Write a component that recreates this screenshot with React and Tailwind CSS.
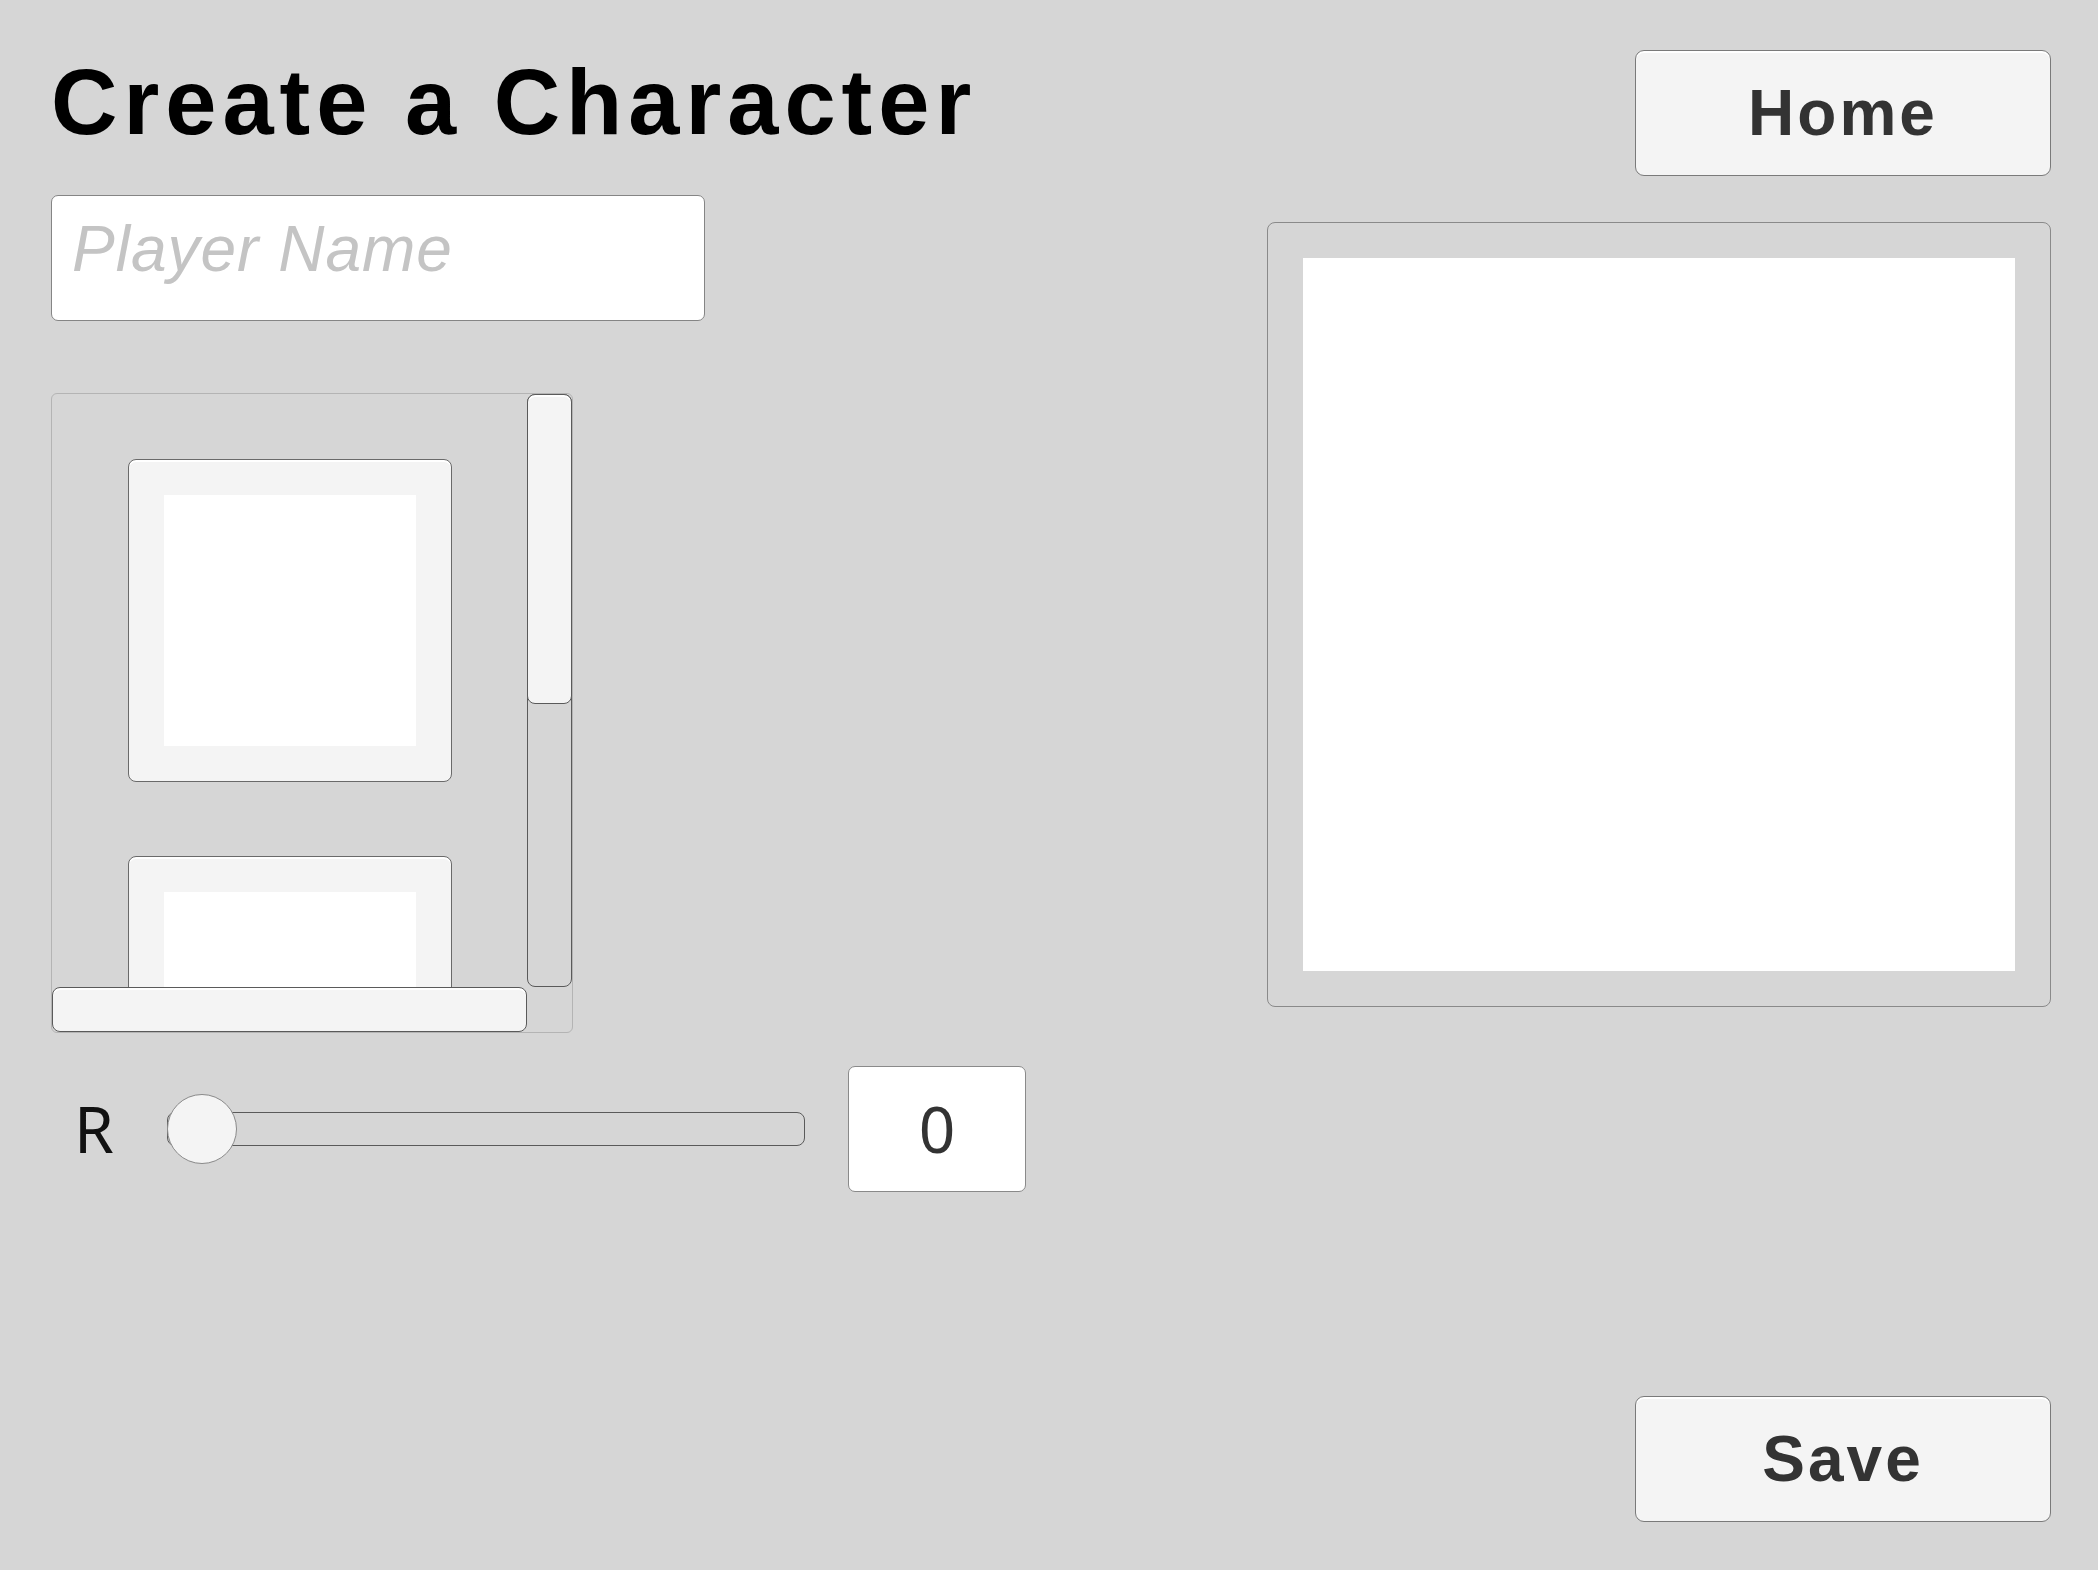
export default function App() {
  const font = { fontFamily: '"Liberation Sans", Arial, sans-serif' };
  const noto = { fontFamily: '"Noto Sans", "Liberation Sans", sans-serif' };
  return (
    <div
      className="w-[2098px] h-[1570px] bg-[#d6d6d6] flex justify-between overflow-hidden"
      style={font}
    >
      {/* Left column */}
      <div className="flex flex-col pl-[51px] pt-[56px]">
        <h1 className="m-0 text-[92px] leading-[92px] font-bold tracking-[6px] text-black whitespace-nowrap">
          Create a Character
        </h1>

        <input
          type="text"
          placeholder="Player Name"
          className="mt-[47px] w-[654px] h-[126px] box-border bg-white border border-[#858585] rounded-[7px] pl-[20px] pr-4 pt-0 pb-[19px] text-[64px] tracking-[1px] text-[#333] placeholder:text-[#c4c4c4] placeholder:italic outline-none"
          style={font}
        />

        {/* Scroll list */}
        <div className="mt-[72px] w-[522px] h-[640px] border border-[#b4b4b4] rounded-[6px] grid grid-cols-[475px_45px] grid-rows-[593px_45px] overflow-hidden">
          <div className="overflow-hidden flex flex-col items-center pt-[65px] gap-[74px]">
            {[0, 1].map((i) => (
              <div
                key={i}
                className="shrink-0 w-[324px] h-[323px] bg-[#f4f4f4] border border-[#6a6a6a] rounded-[8px] p-[35px] shadow-[inset_0_2px_0_#ffffff] flex"
              >
                <div className="flex-1 bg-white" />
              </div>
            ))}
          </div>
          <div className="border border-[#5a5a5a] rounded-[8px] flex flex-col">
            <div className="h-[310px] bg-[#f4f4f4] border border-[#5a5a5a] rounded-[8px] -m-px shadow-[inset_0_2px_0_#ffffff]" />
          </div>
          <div className="bg-[#f4f4f4] border border-[#5a5a5a] rounded-[8px] shadow-[inset_0_2px_0_#ffffff]" />
          <div />
        </div>

        {/* Slider row */}
        <div className="mt-[33px] flex items-center h-[126px]">
          <div className="w-[116px] pl-[23px] text-[64px] leading-[64px] text-[#111]" style={noto}>
            R
          </div>
          <div className="relative w-[638px] h-[70px] flex items-center">
            <div className="w-full h-[34px] border border-[#5a5a5a] rounded-[8px] bg-[#d6d6d6]" />
            <div className="absolute left-0 top-0 w-[70px] h-[70px] rounded-full bg-[#f4f4f4] border border-[#8a8a8a]" />
          </div>
          <div
            className="ml-[43px] w-[178px] h-[126px] bg-white border border-[#8a8a8a] rounded-[7px] flex items-center justify-center text-[64px] leading-[64px] text-[#333]"
            style={noto}
          >
            0
          </div>
        </div>
      </div>

      {/* Right column */}
      <div className="flex flex-col items-end pr-[47px] pt-[50px] pb-[48px]">
        <button
          className="w-[416px] h-[126px] bg-[#f4f4f4] border border-[#7a7a7a] rounded-[9px] shadow-[inset_0_2px_0_#ffffff] text-[64px] font-bold tracking-[3px] text-[#333] flex items-center justify-center"
          style={font}
        >
          Home
        </button>

        <div className="mt-[46px] w-[784px] h-[785px] border border-[#8a8a8a] rounded-[8px] p-[35px] flex">
          <div className="flex-1 bg-white" />
        </div>

        <button
          className="mt-auto w-[416px] h-[126px] bg-[#f4f4f4] border border-[#7a7a7a] rounded-[9px] shadow-[inset_0_2px_0_#ffffff] text-[64px] font-bold tracking-[3px] text-[#333] flex items-center justify-center"
          style={font}
        >
          Save
        </button>
      </div>
    </div>
  );
}
